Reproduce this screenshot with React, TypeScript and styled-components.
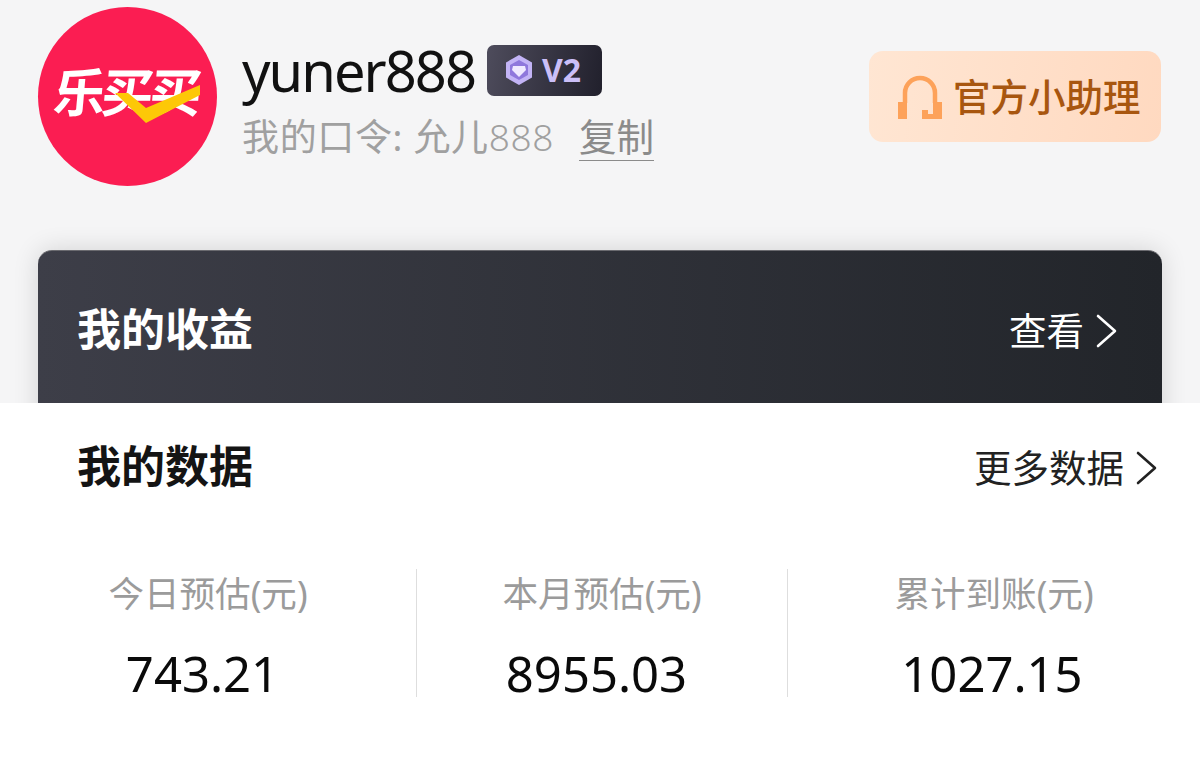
import styled, { createGlobalStyle } from "styled-components";

const GlobalStyle = createGlobalStyle`
  html, body {
    margin: 0;
    padding: 0;
    background: #fff;
    font-family: "Noto Sans", "Noto Sans CJK SC", sans-serif;
  }
`;

const Page = styled.div`
  width: 1200px;
  height: 762px;
  overflow: hidden;
  background: #fff;
`;

const TopArea = styled.div`
  height: 403px;
  box-sizing: border-box;
  padding: 7px 38px 0;
  overflow: hidden;
  background: #f5f5f6;
`;

const Header = styled.div`
  display: flex;
  align-items: flex-start;
  height: 243px;
`;

const Avatar = styled.div`
  position: relative;
  flex: none;
  width: 179px;
  height: 179px;
  border-radius: 50%;
  background: #fb1d52;
`;

const LogoText = styled.span`
  position: absolute;
  left: 16px;
  top: 51px;
  color: #fff;
  font-family: "Noto Sans CJK SC", sans-serif;
  font-size: 52px;
  line-height: 64px;
  font-weight: 700;
  letter-spacing: -4px;
  white-space: nowrap;
  transform: skewX(-5deg);
`;

const LogoCheck = styled.svg`
  position: absolute;
  left: 0;
  top: 0;
`;

const Profile = styled.div`
  margin-left: 25px;
  flex: 1;
  display: flex;
  flex-direction: column;
`;

const NameRow = styled.div`
  display: flex;
  align-items: center;
  height: 90px;
  margin-top: 18px;
`;

const Name = styled.span`
  color: #111;
  font-size: 56px;
  line-height: 70px;
  font-weight: 400;
  letter-spacing: -1.95px;
`;

const Badge = styled.div`
  display: flex;
  align-items: center;
  gap: 9px;
  width: 115px;
  height: 51px;
  box-sizing: border-box;
  margin-left: 12px;
  padding-left: 18px;
  border-radius: 7px;
  background: linear-gradient(100deg, #4e4c5c, #21202c);
`;

const BadgeLabel = styled.span`
  color: #cbbff8;
  font-size: 32px;
  line-height: 36px;
  font-weight: 700;
`;

const CodeRow = styled.div`
  display: flex;
  align-items: center;
  margin-top: -2px;
  color: #a0a0a0;
  font-size: 37px;
  line-height: 48px;
  letter-spacing: 0.65px;
`;

const ThinDigits = styled.span`
  font-weight: 300;
`;

const CopyLink = styled.span`
  margin-left: 25px;
  color: #8b8b8b;
  border-bottom: 1px solid #8b8b8b;
  line-height: 46px;
  font-size: 37.5px;
  letter-spacing: 0;
`;

const HelperButton = styled.div`
  flex: none;
  display: flex;
  align-items: center;
  gap: 11px;
  width: 292px;
  height: 91px;
  box-sizing: border-box;
  margin: 44px 1px 0 0;
  padding-left: 29px;
  border-radius: 14px;
  background: linear-gradient(100deg, #ffe6d3, #ffd9c0);
  color: #a8560f;
  font-size: 37.5px;
  line-height: 50px;
  font-weight: 500;
`;

const EarningsCard = styled.div`
  display: flex;
  align-items: flex-start;
  justify-content: space-between;
  height: 200px;
  box-sizing: border-box;
  padding: 48px 44px 0 39px;
  border-radius: 14px;
  background: linear-gradient(90deg, #3d3e48, #22252a);
  border-top: 1px solid #6a6a6f;
  box-shadow: 0 0 26px rgba(0, 0, 0, 0.14);
`;

const CardLink = styled.div`
  display: flex;
  align-items: center;
  gap: 12px;
  margin-top: 2px;
  color: #fff;
  font-size: 37.5px;
  line-height: 60px;
`;

const SectionTitle = styled.h2<{ $light?: boolean }>`
  margin: 0;
  color: ${(p) => (p.$light ? "#fff" : "#141414")};
  font-size: 44px;
  line-height: 60px;
  font-weight: 700;
`;

const MoreLink = styled.div`
  display: flex;
  align-items: center;
  gap: 12px;
  margin-top: 2px;
  color: #222;
  font-size: 37.5px;
  line-height: 60px;
`;

const DataArea = styled.div`
  height: 359px;
  box-sizing: border-box;
  padding-top: 33px;
  background: #fff;
`;

const DataHeader = styled.div`
  display: flex;
  align-items: flex-start;
  justify-content: space-between;
  padding: 0 42px 0 77px;
`;

const StatsGrid = styled.div`
  display: grid;
  grid-template-columns: 416px 371px 1fr;
  margin-top: 71px;
`;

const StatCell = styled.div<{ $divided?: boolean }>`
  display: flex;
  flex-direction: column;
  align-items: center;
  height: 128px;
  border-left: ${(p) => (p.$divided ? "1px solid #dedede" : "none")};
`;

const StatLabel = styled.div`
  color: #9b9b9b;
  font-size: 35.6px;
  line-height: 48px;
`;

const StatValue = styled.div<{ $shift: number }>`
  margin-top: 26px;
  padding-right: ${(p) => p.$shift}px;
  color: #0a0a0a;
  font-size: 49px;
  line-height: 60px;
`;

const Chevron = ({ color }: { color: string }) => (
  <svg width="22" height="34" viewBox="0 0 22 34" fill="none">
    <path d="M2 2l17 15L2 32" stroke={color} strokeWidth="2.6" strokeLinecap="round" strokeLinejoin="round" />
  </svg>
);

const ShieldIcon = () => (
  <svg width="28" height="32" viewBox="0 0 28 32">
    <path d="M14 1l13 7.5v15L14 31 1 23.5v-15z" fill="#c3b4f6" />
    <path d="M14 6l9 5v10l-9 5-9-5V11z" fill="#8f78dc" />
    <path d="M8 12h12l1 4-7 7-7-7z" fill="#efe9ff" />
  </svg>
);

const HeadsetIcon = () => (
  <svg width="44" height="44" viewBox="0 0 44 44" fill="none">
    <path d="M7 28V18a15 15 0 0 1 30 0v10" stroke="#fda25a" strokeWidth="4.5" />
    <path d="M0 27h9v17H0zM35 27h9v17H24V35h6v4h5z" fill="#fda25a" />
  </svg>
);

const stats = [
  { label: "今日预估(元)", value: "743.21", shift: 11 },
  { label: "本月预估(元)", value: "8955.03", shift: 11 },
  { label: "累计到账(元)", value: "1027.15", shift: 4 },
];

const App = () => {
  return (
    <Page>
      <GlobalStyle />
      <TopArea>
        <Header>
          <Avatar>
            <LogoText>乐买买</LogoText>
            <LogoCheck width="179" height="179" viewBox="0 0 179 179">
              <path d="M77 86h13l18 15 54-23v10l-54 28z" fill="#fdc807" />
            </LogoCheck>
          </Avatar>
          <Profile>
            <NameRow>
              <Name>yuner888</Name>
              <Badge>
                <ShieldIcon />
                <BadgeLabel>V2</BadgeLabel>
              </Badge>
            </NameRow>
            <CodeRow>
              我的口令: 允儿<ThinDigits>888</ThinDigits>
              <CopyLink>复制</CopyLink>
            </CodeRow>
          </Profile>
          <HelperButton>
            <HeadsetIcon />
            官方小助理
          </HelperButton>
        </Header>
        <EarningsCard>
          <SectionTitle $light>我的收益</SectionTitle>
          <CardLink>
            查看
            <Chevron color="#fff" />
          </CardLink>
        </EarningsCard>
      </TopArea>
      <DataArea>
        <DataHeader>
          <SectionTitle>我的数据</SectionTitle>
          <MoreLink>
            更多数据
            <Chevron color="#222" />
          </MoreLink>
        </DataHeader>
        <StatsGrid>
          {stats.map((s, i) => (
            <StatCell key={s.label} $divided={i > 0}>
              <StatLabel>{s.label}</StatLabel>
              <StatValue $shift={s.shift}>{s.value}</StatValue>
            </StatCell>
          ))}
        </StatsGrid>
      </DataArea>
    </Page>
  );
};

export default App;
